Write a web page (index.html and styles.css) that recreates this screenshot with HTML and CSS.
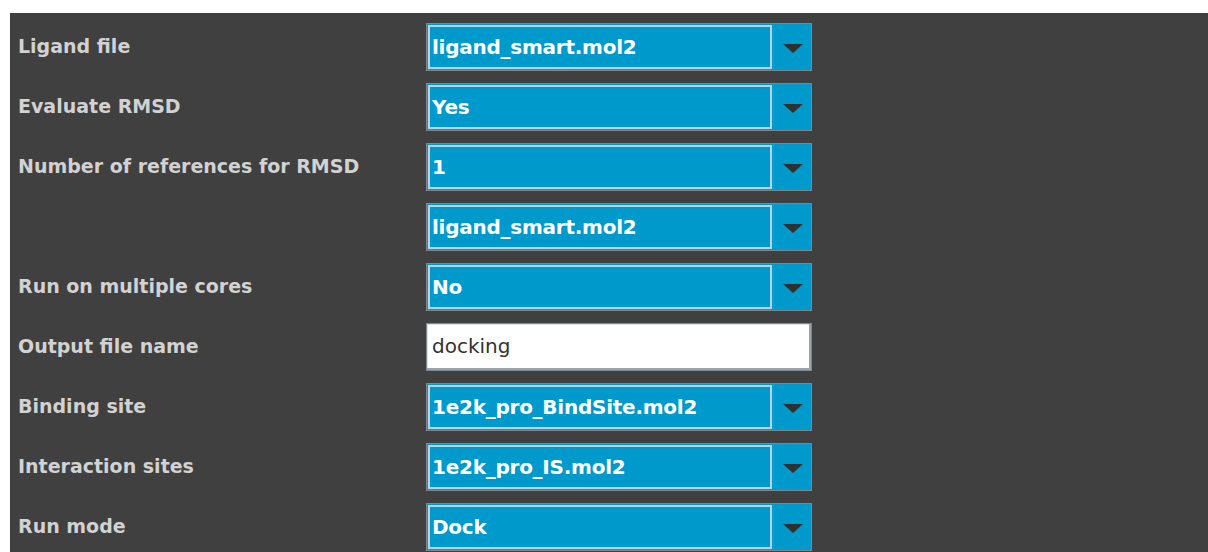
FILE: index.html
```html
<!DOCTYPE html>
<html>
<head>
<meta charset="utf-8">
<link rel="stylesheet" href="styles.css">
</head>
<body>
<div class="panel">
  <div class="row">
    <div class="label">Ligand file</div>
    <div class="combo"><div class="value">ligand_smart.mol2</div><div class="arrow"><span class="tri"></span></div></div>
  </div>
  <div class="row">
    <div class="label">Evaluate RMSD</div>
    <div class="combo"><div class="value">Yes</div><div class="arrow"><span class="tri"></span></div></div>
  </div>
  <div class="row">
    <div class="label">Number of references for RMSD</div>
    <div class="combo"><div class="value">1</div><div class="arrow"><span class="tri"></span></div></div>
  </div>
  <div class="row">
    <div class="label"></div>
    <div class="combo"><div class="value">ligand_smart.mol2</div><div class="arrow"><span class="tri"></span></div></div>
  </div>
  <div class="row">
    <div class="label">Run on multiple cores</div>
    <div class="combo"><div class="value">No</div><div class="arrow"><span class="tri"></span></div></div>
  </div>
  <div class="row">
    <div class="label">Output file name</div>
    <div class="field">docking</div>
  </div>
  <div class="row">
    <div class="label">Binding site</div>
    <div class="combo"><div class="value">1e2k_pro_BindSite.mol2</div><div class="arrow"><span class="tri"></span></div></div>
  </div>
  <div class="row">
    <div class="label">Interaction sites</div>
    <div class="combo"><div class="value">1e2k_pro_IS.mol2</div><div class="arrow"><span class="tri"></span></div></div>
  </div>
  <div class="row">
    <div class="label">Run mode</div>
    <div class="combo"><div class="value">Dock</div><div class="arrow"><span class="tri"></span></div></div>
  </div>
</div>
</body>
</html>
```
FILE: styles.css
```css
html, body {
  margin: 0;
  padding: 0;
  background: #ffffff;
  overflow: hidden;
}
body {
  padding: 13px 0 0 10px;
  height: 552px;
  box-sizing: border-box;
}
.panel {
  background: #404040;
  height: 100%;
  padding: 10px 0 0 8px;
  box-sizing: border-box;
  display: flex;
  flex-direction: column;
  gap: 12px;
  font-family: "DejaVu Sans", Tahoma, sans-serif;
}
.row {
  display: flex;
  align-items: center;
  height: 48px;
}
.label {
  width: 408px;
  color: #d2d2d2;
  font-weight: bold;
  font-size: 19px;
  letter-spacing: 0;
  margin-top: -2px;
}
.combo {
  width: 386px;
  height: 48px;
  box-sizing: border-box;
  border: 1px solid #7d8790;
  background: #0099cc;
  display: flex;
}
.value {
  flex: 1;
  border: 2px solid #b5d4e4;
  margin: 1px 0 1px 1px;
  color: #ffffff;
  font-weight: bold;
  font-size: 20px;
  letter-spacing: -0.25px;
  display: flex;
  align-items: center;
  padding: 0 0 1px 2px;
}
.arrow {
  width: 37px;
  border-left: 1px solid #6b7d88;
  margin-left: 1px;
  display: flex;
  align-items: center;
  justify-content: center;
}
.tri {
  width: 0;
  height: 0;
  border-left: 10px solid transparent;
  border-right: 10px solid transparent;
  border-top: 9px solid #303030;
  margin-top: 2px;
}
.field {
  width: 386px;
  height: 48px;
  box-sizing: border-box;
  background: #ffffff;
  border: 1px solid #7d8790;
  box-shadow: inset -2px -2px 0 #9aa4ac, inset 1px 1px 0 #dfe4e8;
  color: #333333;
  font-family: "DejaVu Sans", Tahoma, sans-serif;
  font-size: 20px;
  display: flex;
  align-items: center;
  padding: 0 0 2px 5px;
}
```
